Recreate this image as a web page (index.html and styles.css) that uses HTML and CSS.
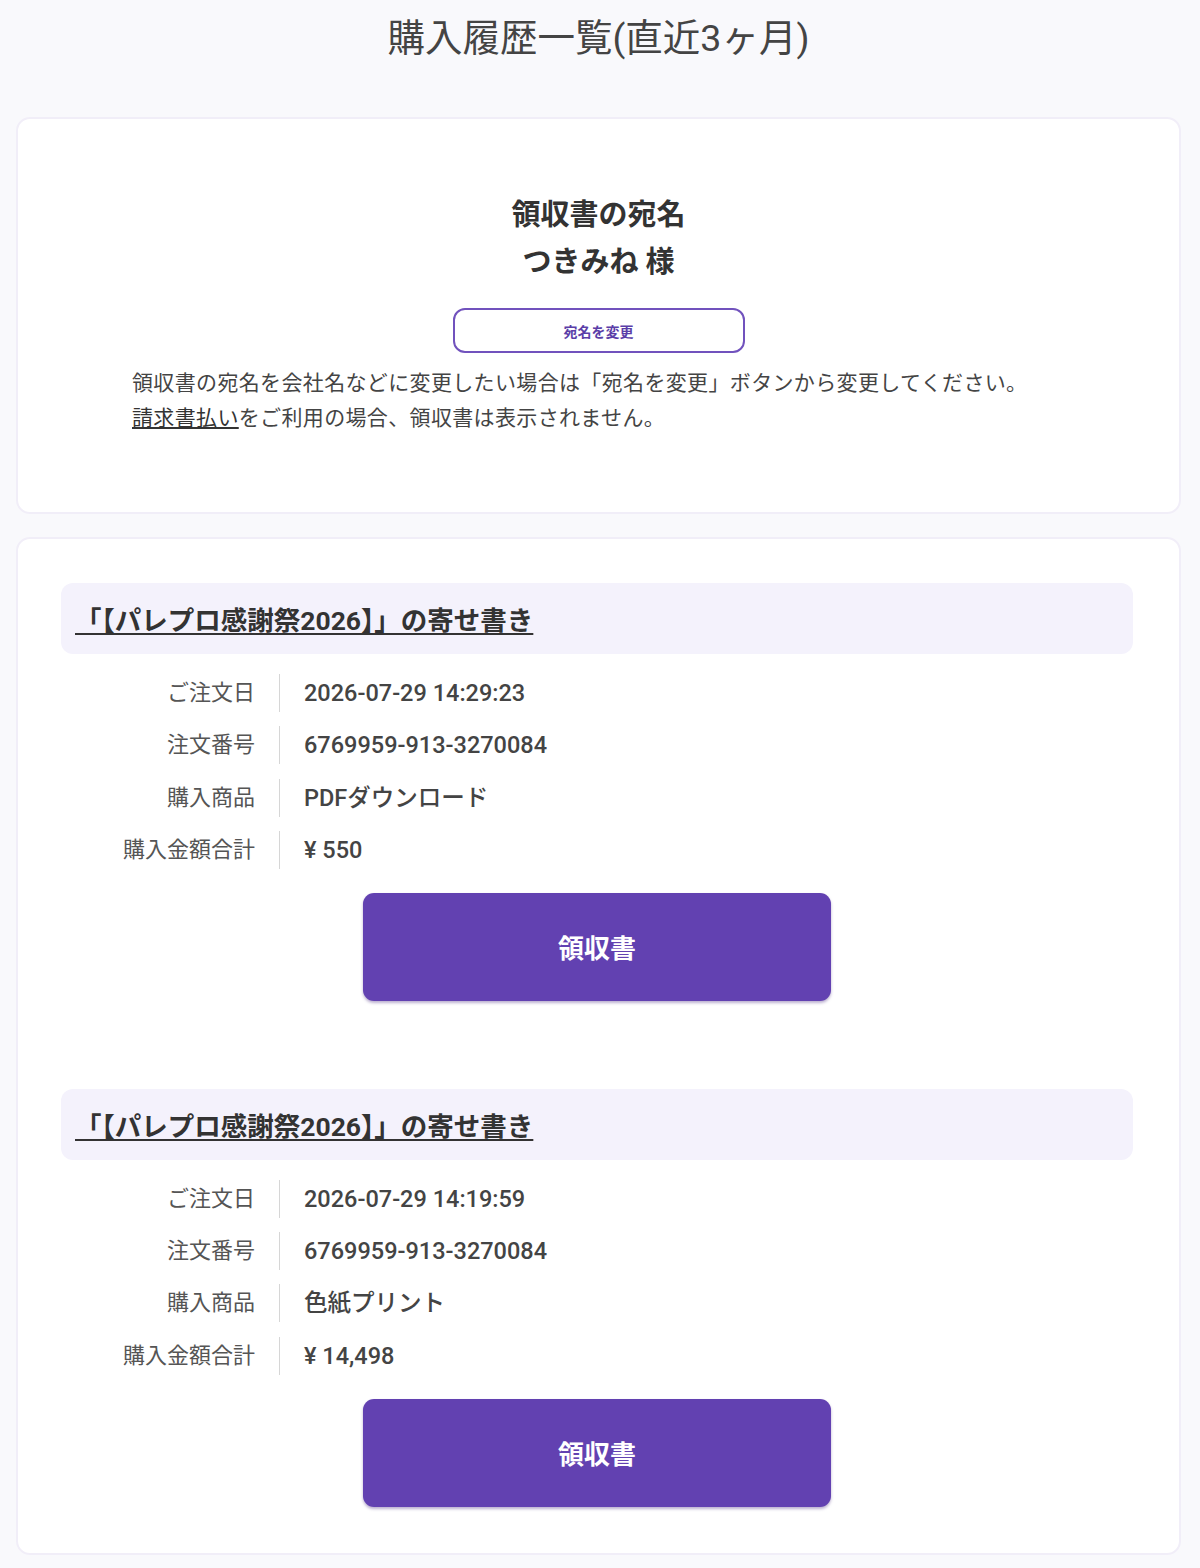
FILE: index.html
```html
<!DOCTYPE html>
<html lang="ja">
<head>
  <meta charset="UTF-8">
  <meta name="viewport" content="width=device-width, initial-scale=1.0">
  <title>購入履歴一覧</title>
  <link rel="stylesheet" href="styles.css">
</head>
<body>
  <h1 class="page-title">購入履歴一覧(直近3ヶ月)</h1>

  <section class="card addressee">
    <h2 class="addressee-heading">領収書の宛名<br>つきみね 様</h2>
    <button class="btn-outline">宛名を変更</button>
    <p class="addressee-note">
      領収書の宛名を会社名などに変更したい場合は「宛名を変更」ボタンから変更してください。<br>
      <a href="#">請求書払い</a>をご利用の場合、領収書は表示されません。
    </p>
  </section>

  <section class="card orders">
    <div class="order">
      <h3 class="order-title"><a href="#">「【パレプロ感謝祭2026】」の寄せ書き</a></h3>
      <dl class="order-info">
        <dt>ご注文日</dt><dd>2026-07-29 14:29:23</dd>
        <dt>注文番号</dt><dd>6769959-913-3270084</dd>
        <dt>購入商品</dt><dd>PDFダウンロード</dd>
        <dt>購入金額合計</dt><dd>¥ 550</dd>
      </dl>
      <button class="btn-receipt">領収書</button>
    </div>

    <div class="order">
      <h3 class="order-title"><a href="#">「【パレプロ感謝祭2026】」の寄せ書き</a></h3>
      <dl class="order-info">
        <dt>ご注文日</dt><dd>2026-07-29 14:19:59</dd>
        <dt>注文番号</dt><dd>6769959-913-3270084</dd>
        <dt>購入商品</dt><dd>色紙プリント</dd>
        <dt>購入金額合計</dt><dd>¥ 14,498</dd>
      </dl>
      <button class="btn-receipt">領収書</button>
    </div>
  </section>
</body>
</html>
```

FILE: styles.css
```css
body {
  margin: 0;
  padding: 0 19px 14px 16px;
  background-color: #f9f9fc;
  color: #444;
  font-family: Roboto, "Noto Sans CJK JP", sans-serif;
}

.page-title {
  margin: 0 0 51px;
  padding-top: 10px;
  font-size: 37.5px;
  font-weight: 400;
  line-height: 56px;
  text-align: center;
  color: #444;
}

.card {
  background-color: #fff;
  border: 2px solid #f1eef8;
  border-radius: 14px;
  box-sizing: border-box;
}

/* receipt addressee */
.addressee {
  padding: 73px 114px 76px;
  text-align: center;
}
.addressee-heading {
  margin: 0;
  font-size: 29px;
  font-weight: 700;
  line-height: 47px;
  color: #333;
}
.btn-outline {
  display: block;
  width: 292px;
  height: 45px;
  margin: 22px auto 0;
  background-color: #fff;
  border: 2px solid #7152bd;
  border-radius: 12px;
  color: #5b3ea8;
  font-family: inherit;
  font-size: 14px;
  font-weight: 700;
  cursor: pointer;
}
.addressee-note {
  margin: 13px 0 0;
  font-size: 21px;
  line-height: 35px;
  letter-spacing: 0.35px;
  text-align: left;
  color: #444;
}
.addressee-note a {
  color: #333;
  text-decoration: underline;
}

/* order list */
.orders {
  margin-top: 23px;
  padding: 44px 46px 46px 43px;
}
.order + .order {
  margin-top: 88px;
}
.order-title {
  margin: 0;
  padding: 0 14px;
  height: 71px;
  display: flex;
  align-items: center;
  background-color: #f4f2fc;
  border-radius: 12px;
  font-size: 26.5px;
  font-weight: 700;
}
.order-title a {
  color: #333;
  text-decoration: underline;
  text-underline-offset: 3px;
}
.order-info {
  display: grid;
  grid-template-columns: 218px 1fr;
  row-gap: 14.3px;
  margin: 20px 0 0;
}
.order-info dt {
  padding-right: 24px;
  font-size: 22px;
  line-height: 38px;
  text-align: right;
  color: #555;
}
.order-info dd {
  margin: 0;
  padding-left: 24px;
  border-left: 1px solid #d6d6d6;
  font-size: 23.5px;
  font-weight: 500;
  line-height: 38px;
  color: #444;
}
.btn-receipt {
  display: block;
  width: 468px;
  height: 108px;
  margin: 24px auto 0;
  background-color: #6241b1;
  border: none;
  border-radius: 11px;
  box-shadow: 0 2px 3px rgba(60, 30, 120, 0.35);
  color: #fff;
  font-family: inherit;
  font-size: 26px;
  font-weight: 700;
  cursor: pointer;
}
```
